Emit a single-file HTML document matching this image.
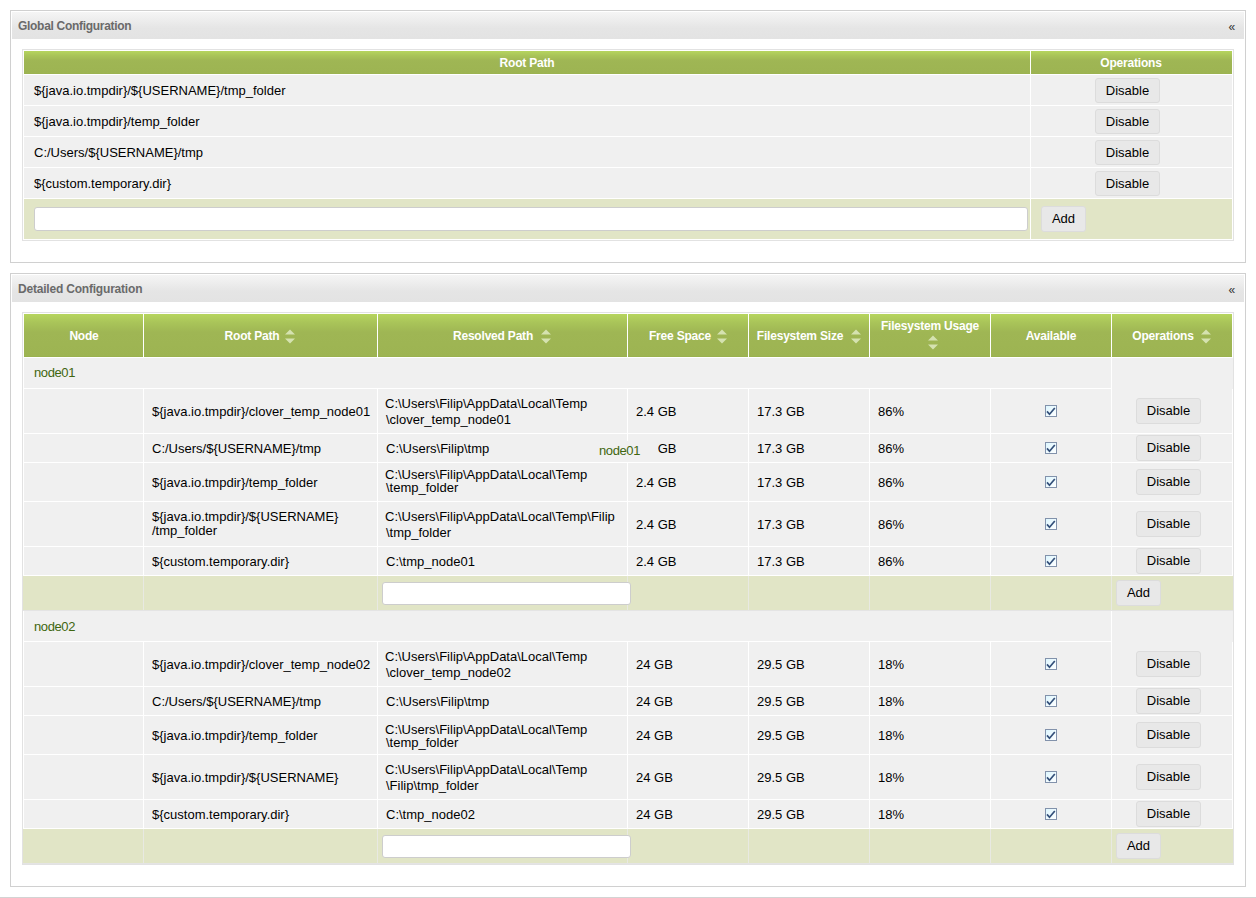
<!DOCTYPE html>
<html><head><meta charset="utf-8"><style>
html,body{margin:0;padding:0;background:#fff;}
body{position:relative;width:1256px;height:898px;overflow:hidden;font-family:"Liberation Sans",sans-serif;}
body>div,body>svg{position:absolute;box-sizing:border-box;}
.t{white-space:nowrap;line-height:1;}
.btn{background:#e8e8e8;border:1px solid #dcdcdc;border-radius:3px;text-align:center;font-size:13px;color:#000;}
.inp{background:#fff;border:1px solid #cdcdcd;border-radius:3px;}
</style></head><body>
<div style="left:10px;top:10px;width:1236px;height:253px;border:1px solid #d0d0d0;box-sizing:border-box;background:#fff"></div>
<div style="left:12px;top:12px;width:1232px;height:27px;background:linear-gradient(to bottom,#f5f5f5 0%,#e5e5e5 60%,#e3e3e3 100%)"></div>
<div class="t" style="left:18px;top:20px;font-size:12px;font-weight:bold;color:#6a6a6a;letter-spacing:-0.3px">Global Configuration</div>
<div class="t" style="left:1228.5px;top:21px;font-size:12px;font-weight:normal;color:#333;">&laquo;</div>
<div style="left:22px;top:49px;width:1212px;height:192px;border:1px solid #e2e2e2;box-sizing:border-box;background:#fff"></div>
<div style="left:24px;top:51px;width:1006px;height:23px;background:linear-gradient(to bottom,#b6d55e 0%,#a9c459 20%,#9fb654 42%,#9db452 97%,#98b04d 100%)"></div>
<div style="left:1031px;top:51px;width:201px;height:23px;background:linear-gradient(to bottom,#b6d55e 0%,#a9c459 20%,#9fb654 42%,#9db452 97%,#98b04d 100%)"></div>
<div class="t" style="left:377px;width:300px;text-align:center;top:57px;font-size:12px;font-weight:bold;color:#fff;letter-spacing:-0.2px">Root Path</div>
<div class="t" style="left:981px;width:300px;text-align:center;top:57px;font-size:12px;font-weight:bold;color:#fff;letter-spacing:-0.2px">Operations</div>
<div style="left:24px;top:75px;width:1006px;height:30px;background:#f0f0f0"></div>
<div style="left:1031px;top:75px;width:201px;height:30px;background:#f0f0f0"></div>
<div class="t" style="left:34px;top:84px;font-size:13px;font-weight:normal;color:#000;">${java.io.tmpdir}/${USERNAME}/tmp_folder</div>
<div class="btn" style="left:1095px;top:78px;width:65px;height:25px;line-height:23px">Disable</div>
<div style="left:24px;top:106px;width:1006px;height:30px;background:#f0f0f0"></div>
<div style="left:1031px;top:106px;width:201px;height:30px;background:#f0f0f0"></div>
<div class="t" style="left:34px;top:115px;font-size:13px;font-weight:normal;color:#000;">${java.io.tmpdir}/temp_folder</div>
<div class="btn" style="left:1095px;top:109px;width:65px;height:25px;line-height:23px">Disable</div>
<div style="left:24px;top:137px;width:1006px;height:30px;background:#f0f0f0"></div>
<div style="left:1031px;top:137px;width:201px;height:30px;background:#f0f0f0"></div>
<div class="t" style="left:34px;top:146px;font-size:13px;font-weight:normal;color:#000;">C:/Users/${USERNAME}/tmp</div>
<div class="btn" style="left:1095px;top:140px;width:65px;height:25px;line-height:23px">Disable</div>
<div style="left:24px;top:168px;width:1006px;height:30px;background:#f0f0f0"></div>
<div style="left:1031px;top:168px;width:201px;height:30px;background:#f0f0f0"></div>
<div class="t" style="left:34px;top:177px;font-size:13px;font-weight:normal;color:#000;">${custom.temporary.dir}</div>
<div class="btn" style="left:1095px;top:171px;width:65px;height:25px;line-height:23px">Disable</div>
<div style="left:24px;top:199px;width:1006px;height:40px;background:#e1e5c6"></div>
<div style="left:1031px;top:199px;width:201px;height:40px;background:#e1e5c6"></div>
<div class="inp" style="left:34px;top:207px;width:994px;height:24px"></div>
<div class="btn" style="left:1041px;top:206px;width:45px;height:26px;line-height:24px">Add</div>
<div style="left:10px;top:273px;width:1236px;height:614px;border:1px solid #d0d0d0;box-sizing:border-box;background:#fff"></div>
<div style="left:12px;top:275px;width:1232px;height:27px;background:linear-gradient(to bottom,#f5f5f5 0%,#e5e5e5 60%,#e3e3e3 100%)"></div>
<div class="t" style="left:18px;top:283px;font-size:12px;font-weight:bold;color:#6a6a6a;letter-spacing:-0.2px">Detailed Configuration</div>
<div class="t" style="left:1228.5px;top:284px;font-size:12px;font-weight:normal;color:#333;">&laquo;</div>
<div style="left:22px;top:312px;width:1212px;height:553px;border:1px solid #e2e2e2;box-sizing:border-box;background:#fff"></div>
<div style="left:24px;top:314px;width:119px;height:43px;background:linear-gradient(to bottom,#b6d55e 0%,#a9c459 20%,#9fb654 42%,#9db452 97%,#98b04d 100%)"></div>
<div style="left:144px;top:314px;width:233px;height:43px;background:linear-gradient(to bottom,#b6d55e 0%,#a9c459 20%,#9fb654 42%,#9db452 97%,#98b04d 100%)"></div>
<div style="left:378px;top:314px;width:249px;height:43px;background:linear-gradient(to bottom,#b6d55e 0%,#a9c459 20%,#9fb654 42%,#9db452 97%,#98b04d 100%)"></div>
<div style="left:628px;top:314px;width:120px;height:43px;background:linear-gradient(to bottom,#b6d55e 0%,#a9c459 20%,#9fb654 42%,#9db452 97%,#98b04d 100%)"></div>
<div style="left:749px;top:314px;width:120px;height:43px;background:linear-gradient(to bottom,#b6d55e 0%,#a9c459 20%,#9fb654 42%,#9db452 97%,#98b04d 100%)"></div>
<div style="left:870px;top:314px;width:120px;height:43px;background:linear-gradient(to bottom,#b6d55e 0%,#a9c459 20%,#9fb654 42%,#9db452 97%,#98b04d 100%)"></div>
<div style="left:991px;top:314px;width:120px;height:43px;background:linear-gradient(to bottom,#b6d55e 0%,#a9c459 20%,#9fb654 42%,#9db452 97%,#98b04d 100%)"></div>
<div style="left:1112px;top:314px;width:120px;height:43px;background:linear-gradient(to bottom,#b6d55e 0%,#a9c459 20%,#9fb654 42%,#9db452 97%,#98b04d 100%)"></div>
<div class="t" style="left:-66px;width:300px;text-align:center;top:330px;font-size:12px;font-weight:bold;color:#fff;letter-spacing:-0.2px">Node</div>
<div class="t" style="left:102px;width:300px;text-align:center;top:330px;font-size:12px;font-weight:bold;color:#fff;letter-spacing:-0.2px">Root Path</div>
<svg style="left:285px;top:329px" width="10" height="15" viewBox="0 0 10 15"><path d="M0 5.5 L5 0.5 L10 5.5 Z M0 9.5 L5 14.5 L10 9.5 Z" fill="#d5e2b0"/></svg>
<div class="t" style="left:343px;width:300px;text-align:center;top:330px;font-size:12px;font-weight:bold;color:#fff;letter-spacing:-0.2px">Resolved Path</div>
<svg style="left:541px;top:329px" width="10" height="15" viewBox="0 0 10 15"><path d="M0 5.5 L5 0.5 L10 5.5 Z M0 9.5 L5 14.5 L10 9.5 Z" fill="#d5e2b0"/></svg>
<div class="t" style="left:530px;width:300px;text-align:center;top:330px;font-size:12px;font-weight:bold;color:#fff;letter-spacing:-0.2px">Free Space</div>
<svg style="left:717px;top:329px" width="10" height="15" viewBox="0 0 10 15"><path d="M0 5.5 L5 0.5 L10 5.5 Z M0 9.5 L5 14.5 L10 9.5 Z" fill="#d5e2b0"/></svg>
<div class="t" style="left:650px;width:300px;text-align:center;top:330px;font-size:12px;font-weight:bold;color:#fff;letter-spacing:-0.2px">Filesystem Size</div>
<svg style="left:851px;top:329px" width="10" height="15" viewBox="0 0 10 15"><path d="M0 5.5 L5 0.5 L10 5.5 Z M0 9.5 L5 14.5 L10 9.5 Z" fill="#d5e2b0"/></svg>
<div class="t" style="left:780px;width:300px;text-align:center;top:320px;font-size:12px;font-weight:bold;color:#fff;letter-spacing:-0.2px">Filesystem Usage</div>
<svg style="left:928px;top:335px" width="10" height="15" viewBox="0 0 10 15"><path d="M0 5.5 L5 0.5 L10 5.5 Z M0 9.5 L5 14.5 L10 9.5 Z" fill="#d5e2b0"/></svg>
<div class="t" style="left:901px;width:300px;text-align:center;top:330px;font-size:12px;font-weight:bold;color:#fff;letter-spacing:-0.2px">Available</div>
<div class="t" style="left:1013px;width:300px;text-align:center;top:330px;font-size:12px;font-weight:bold;color:#fff;letter-spacing:-0.2px">Operations</div>
<svg style="left:1201px;top:329px" width="10" height="15" viewBox="0 0 10 15"><path d="M0 5.5 L5 0.5 L10 5.5 Z M0 9.5 L5 14.5 L10 9.5 Z" fill="#d5e2b0"/></svg>
<div style="left:24px;top:358px;width:1087px;height:30px;background:#f0f0f0"></div>
<div style="left:1112px;top:358px;width:121px;height:31px;background:#f0f0f0"></div>
<div class="t" style="left:34px;top:366px;font-size:13px;font-weight:normal;color:#40660f;letter-spacing:-0.4px">node01</div>
<div style="left:24px;top:389px;width:119px;height:44px;background:#f0f0f0"></div>
<div style="left:144px;top:389px;width:233px;height:44px;background:#f0f0f0"></div>
<div style="left:378px;top:389px;width:249px;height:44px;background:#f0f0f0"></div>
<div style="left:628px;top:389px;width:120px;height:44px;background:#f0f0f0"></div>
<div style="left:749px;top:389px;width:120px;height:44px;background:#f0f0f0"></div>
<div style="left:870px;top:389px;width:120px;height:44px;background:#f0f0f0"></div>
<div style="left:991px;top:389px;width:120px;height:44px;background:#f0f0f0"></div>
<div style="left:1112px;top:389px;width:120px;height:44px;background:#f0f0f0"></div>
<div class="t" style="left:152px;top:405px;font-size:13px;font-weight:normal;color:#000;">${java.io.tmpdir}/clover_temp_node01</div>
<div class="t" style="left:385px;top:397px;font-size:13px;font-weight:normal;color:#000;">C:\Users\Filip\AppData\Local\Temp</div>
<div class="t" style="left:386px;top:413px;font-size:13px;font-weight:normal;color:#000;">\clover_temp_node01</div>
<div class="t" style="left:636px;top:405px;font-size:13px;font-weight:normal;color:#000;">2.4 GB</div>
<div class="t" style="left:757px;top:405px;font-size:13px;font-weight:normal;color:#000;">17.3 GB</div>
<div class="t" style="left:878px;top:405px;font-size:13px;font-weight:normal;color:#000;">86%</div>
<svg style="left:1045px;top:405px" width="12" height="12" viewBox="0 0 12 12"><defs><linearGradient id="cg1045405" x1="0" y1="0" x2="1" y2="1"><stop offset="0" stop-color="#dcf6ff"/><stop offset="1" stop-color="#ffffff"/></linearGradient></defs><rect x="0.5" y="0.5" width="11" height="11" fill="url(#cg1045405)" stroke="#8292ab"/><path d="M2 6.4 L4.5 9.3 L9.8 3" fill="none" stroke="#34507a" stroke-width="1.7"/></svg>
<div class="btn" style="left:1136px;top:398px;width:65px;height:26px;line-height:24px">Disable</div>
<div style="left:24px;top:434px;width:119px;height:28px;background:#f0f0f0"></div>
<div style="left:144px;top:434px;width:233px;height:28px;background:#f0f0f0"></div>
<div style="left:378px;top:434px;width:249px;height:28px;background:#f0f0f0"></div>
<div style="left:628px;top:434px;width:120px;height:28px;background:#f0f0f0"></div>
<div style="left:749px;top:434px;width:120px;height:28px;background:#f0f0f0"></div>
<div style="left:870px;top:434px;width:120px;height:28px;background:#f0f0f0"></div>
<div style="left:991px;top:434px;width:120px;height:28px;background:#f0f0f0"></div>
<div style="left:1112px;top:434px;width:120px;height:28px;background:#f0f0f0"></div>
<div class="t" style="left:152px;top:442px;font-size:13px;font-weight:normal;color:#000;">C:/Users/${USERNAME}/tmp</div>
<div class="t" style="left:386px;top:442px;font-size:13px;font-weight:normal;color:#000;">C:\Users\Filip\tmp</div>
<div class="t" style="left:636px;top:442px;font-size:13px;font-weight:normal;color:#000;">2.4 GB</div>
<div class="t" style="left:757px;top:442px;font-size:13px;font-weight:normal;color:#000;">17.3 GB</div>
<div class="t" style="left:878px;top:442px;font-size:13px;font-weight:normal;color:#000;">86%</div>
<svg style="left:1045px;top:442px" width="12" height="12" viewBox="0 0 12 12"><defs><linearGradient id="cg1045442" x1="0" y1="0" x2="1" y2="1"><stop offset="0" stop-color="#dcf6ff"/><stop offset="1" stop-color="#ffffff"/></linearGradient></defs><rect x="0.5" y="0.5" width="11" height="11" fill="url(#cg1045442)" stroke="#8292ab"/><path d="M2 6.4 L4.5 9.3 L9.8 3" fill="none" stroke="#34507a" stroke-width="1.7"/></svg>
<div class="btn" style="left:1136px;top:435px;width:65px;height:26px;line-height:24px">Disable</div>
<div style="left:24px;top:463px;width:119px;height:38px;background:#f0f0f0"></div>
<div style="left:144px;top:463px;width:233px;height:38px;background:#f0f0f0"></div>
<div style="left:378px;top:463px;width:249px;height:38px;background:#f0f0f0"></div>
<div style="left:628px;top:463px;width:120px;height:38px;background:#f0f0f0"></div>
<div style="left:749px;top:463px;width:120px;height:38px;background:#f0f0f0"></div>
<div style="left:870px;top:463px;width:120px;height:38px;background:#f0f0f0"></div>
<div style="left:991px;top:463px;width:120px;height:38px;background:#f0f0f0"></div>
<div style="left:1112px;top:463px;width:120px;height:38px;background:#f0f0f0"></div>
<div class="t" style="left:152px;top:476px;font-size:13px;font-weight:normal;color:#000;">${java.io.tmpdir}/temp_folder</div>
<div class="t" style="left:385px;top:468px;font-size:13px;font-weight:normal;color:#000;">C:\Users\Filip\AppData\Local\Temp</div>
<div class="t" style="left:386px;top:481px;font-size:13px;font-weight:normal;color:#000;">\temp_folder</div>
<div class="t" style="left:636px;top:476px;font-size:13px;font-weight:normal;color:#000;">2.4 GB</div>
<div class="t" style="left:757px;top:476px;font-size:13px;font-weight:normal;color:#000;">17.3 GB</div>
<div class="t" style="left:878px;top:476px;font-size:13px;font-weight:normal;color:#000;">86%</div>
<svg style="left:1045px;top:476px" width="12" height="12" viewBox="0 0 12 12"><defs><linearGradient id="cg1045476" x1="0" y1="0" x2="1" y2="1"><stop offset="0" stop-color="#dcf6ff"/><stop offset="1" stop-color="#ffffff"/></linearGradient></defs><rect x="0.5" y="0.5" width="11" height="11" fill="url(#cg1045476)" stroke="#8292ab"/><path d="M2 6.4 L4.5 9.3 L9.8 3" fill="none" stroke="#34507a" stroke-width="1.7"/></svg>
<div class="btn" style="left:1136px;top:469px;width:65px;height:26px;line-height:24px">Disable</div>
<div style="left:24px;top:502px;width:119px;height:44px;background:#f0f0f0"></div>
<div style="left:144px;top:502px;width:233px;height:44px;background:#f0f0f0"></div>
<div style="left:378px;top:502px;width:249px;height:44px;background:#f0f0f0"></div>
<div style="left:628px;top:502px;width:120px;height:44px;background:#f0f0f0"></div>
<div style="left:749px;top:502px;width:120px;height:44px;background:#f0f0f0"></div>
<div style="left:870px;top:502px;width:120px;height:44px;background:#f0f0f0"></div>
<div style="left:991px;top:502px;width:120px;height:44px;background:#f0f0f0"></div>
<div style="left:1112px;top:502px;width:120px;height:44px;background:#f0f0f0"></div>
<div class="t" style="left:152px;top:510px;font-size:13px;font-weight:normal;color:#000;">${java.io.tmpdir}/${USERNAME}</div>
<div class="t" style="left:152px;top:524px;font-size:13px;font-weight:normal;color:#000;">/tmp_folder</div>
<div class="t" style="left:385px;top:510px;font-size:13px;font-weight:normal;color:#000;">C:\Users\Filip\AppData\Local\Temp\Filip</div>
<div class="t" style="left:386px;top:526px;font-size:13px;font-weight:normal;color:#000;">\tmp_folder</div>
<div class="t" style="left:636px;top:518px;font-size:13px;font-weight:normal;color:#000;">2.4 GB</div>
<div class="t" style="left:757px;top:518px;font-size:13px;font-weight:normal;color:#000;">17.3 GB</div>
<div class="t" style="left:878px;top:518px;font-size:13px;font-weight:normal;color:#000;">86%</div>
<svg style="left:1045px;top:518px" width="12" height="12" viewBox="0 0 12 12"><defs><linearGradient id="cg1045518" x1="0" y1="0" x2="1" y2="1"><stop offset="0" stop-color="#dcf6ff"/><stop offset="1" stop-color="#ffffff"/></linearGradient></defs><rect x="0.5" y="0.5" width="11" height="11" fill="url(#cg1045518)" stroke="#8292ab"/><path d="M2 6.4 L4.5 9.3 L9.8 3" fill="none" stroke="#34507a" stroke-width="1.7"/></svg>
<div class="btn" style="left:1136px;top:511px;width:65px;height:26px;line-height:24px">Disable</div>
<div style="left:24px;top:547px;width:119px;height:28px;background:#f0f0f0"></div>
<div style="left:144px;top:547px;width:233px;height:28px;background:#f0f0f0"></div>
<div style="left:378px;top:547px;width:249px;height:28px;background:#f0f0f0"></div>
<div style="left:628px;top:547px;width:120px;height:28px;background:#f0f0f0"></div>
<div style="left:749px;top:547px;width:120px;height:28px;background:#f0f0f0"></div>
<div style="left:870px;top:547px;width:120px;height:28px;background:#f0f0f0"></div>
<div style="left:991px;top:547px;width:120px;height:28px;background:#f0f0f0"></div>
<div style="left:1112px;top:547px;width:120px;height:28px;background:#f0f0f0"></div>
<div class="t" style="left:152px;top:555px;font-size:13px;font-weight:normal;color:#000;">${custom.temporary.dir}</div>
<div class="t" style="left:386px;top:555px;font-size:13px;font-weight:normal;color:#000;">C:\tmp_node01</div>
<div class="t" style="left:636px;top:555px;font-size:13px;font-weight:normal;color:#000;">2.4 GB</div>
<div class="t" style="left:757px;top:555px;font-size:13px;font-weight:normal;color:#000;">17.3 GB</div>
<div class="t" style="left:878px;top:555px;font-size:13px;font-weight:normal;color:#000;">86%</div>
<svg style="left:1045px;top:555px" width="12" height="12" viewBox="0 0 12 12"><defs><linearGradient id="cg1045555" x1="0" y1="0" x2="1" y2="1"><stop offset="0" stop-color="#dcf6ff"/><stop offset="1" stop-color="#ffffff"/></linearGradient></defs><rect x="0.5" y="0.5" width="11" height="11" fill="url(#cg1045555)" stroke="#8292ab"/><path d="M2 6.4 L4.5 9.3 L9.8 3" fill="none" stroke="#34507a" stroke-width="1.7"/></svg>
<div class="btn" style="left:1136px;top:548px;width:65px;height:26px;line-height:24px">Disable</div>
<div style="left:23px;top:576px;width:1210px;height:34px;background:#e1e5c6"></div>
<div style="left:143px;top:576px;width:1px;height:34px;background:#e8e9e2"></div>
<div style="left:377px;top:576px;width:1px;height:34px;background:#e8e9e2"></div>
<div style="left:627px;top:576px;width:1px;height:34px;background:#e8e9e2"></div>
<div style="left:748px;top:576px;width:1px;height:34px;background:#e8e9e2"></div>
<div style="left:869px;top:576px;width:1px;height:34px;background:#e8e9e2"></div>
<div style="left:990px;top:576px;width:1px;height:34px;background:#e8e9e2"></div>
<div style="left:1111px;top:576px;width:1px;height:34px;background:#e8e9e2"></div>
<div style="left:23px;top:610px;width:1210px;height:1px;background:#e4e4e4"></div>
<div class="inp" style="left:382px;top:582px;width:249px;height:23px"></div>
<div class="btn" style="left:1116px;top:580px;width:45px;height:26px;line-height:24px">Add</div>
<div style="left:24px;top:611px;width:1087px;height:30px;background:#f0f0f0"></div>
<div style="left:1112px;top:611px;width:121px;height:31px;background:#f0f0f0"></div>
<div class="t" style="left:34px;top:620px;font-size:13px;font-weight:normal;color:#40660f;letter-spacing:-0.4px">node02</div>
<div style="left:24px;top:642px;width:119px;height:44px;background:#f0f0f0"></div>
<div style="left:144px;top:642px;width:233px;height:44px;background:#f0f0f0"></div>
<div style="left:378px;top:642px;width:249px;height:44px;background:#f0f0f0"></div>
<div style="left:628px;top:642px;width:120px;height:44px;background:#f0f0f0"></div>
<div style="left:749px;top:642px;width:120px;height:44px;background:#f0f0f0"></div>
<div style="left:870px;top:642px;width:120px;height:44px;background:#f0f0f0"></div>
<div style="left:991px;top:642px;width:120px;height:44px;background:#f0f0f0"></div>
<div style="left:1112px;top:642px;width:120px;height:44px;background:#f0f0f0"></div>
<div class="t" style="left:152px;top:658px;font-size:13px;font-weight:normal;color:#000;">${java.io.tmpdir}/clover_temp_node02</div>
<div class="t" style="left:385px;top:650px;font-size:13px;font-weight:normal;color:#000;">C:\Users\Filip\AppData\Local\Temp</div>
<div class="t" style="left:386px;top:666px;font-size:13px;font-weight:normal;color:#000;">\clover_temp_node02</div>
<div class="t" style="left:636px;top:658px;font-size:13px;font-weight:normal;color:#000;">24 GB</div>
<div class="t" style="left:757px;top:658px;font-size:13px;font-weight:normal;color:#000;">29.5 GB</div>
<div class="t" style="left:878px;top:658px;font-size:13px;font-weight:normal;color:#000;">18%</div>
<svg style="left:1045px;top:658px" width="12" height="12" viewBox="0 0 12 12"><defs><linearGradient id="cg1045658" x1="0" y1="0" x2="1" y2="1"><stop offset="0" stop-color="#dcf6ff"/><stop offset="1" stop-color="#ffffff"/></linearGradient></defs><rect x="0.5" y="0.5" width="11" height="11" fill="url(#cg1045658)" stroke="#8292ab"/><path d="M2 6.4 L4.5 9.3 L9.8 3" fill="none" stroke="#34507a" stroke-width="1.7"/></svg>
<div class="btn" style="left:1136px;top:651px;width:65px;height:26px;line-height:24px">Disable</div>
<div style="left:24px;top:687px;width:119px;height:28px;background:#f0f0f0"></div>
<div style="left:144px;top:687px;width:233px;height:28px;background:#f0f0f0"></div>
<div style="left:378px;top:687px;width:249px;height:28px;background:#f0f0f0"></div>
<div style="left:628px;top:687px;width:120px;height:28px;background:#f0f0f0"></div>
<div style="left:749px;top:687px;width:120px;height:28px;background:#f0f0f0"></div>
<div style="left:870px;top:687px;width:120px;height:28px;background:#f0f0f0"></div>
<div style="left:991px;top:687px;width:120px;height:28px;background:#f0f0f0"></div>
<div style="left:1112px;top:687px;width:120px;height:28px;background:#f0f0f0"></div>
<div class="t" style="left:152px;top:695px;font-size:13px;font-weight:normal;color:#000;">C:/Users/${USERNAME}/tmp</div>
<div class="t" style="left:386px;top:695px;font-size:13px;font-weight:normal;color:#000;">C:\Users\Filip\tmp</div>
<div class="t" style="left:636px;top:695px;font-size:13px;font-weight:normal;color:#000;">24 GB</div>
<div class="t" style="left:757px;top:695px;font-size:13px;font-weight:normal;color:#000;">29.5 GB</div>
<div class="t" style="left:878px;top:695px;font-size:13px;font-weight:normal;color:#000;">18%</div>
<svg style="left:1045px;top:695px" width="12" height="12" viewBox="0 0 12 12"><defs><linearGradient id="cg1045695" x1="0" y1="0" x2="1" y2="1"><stop offset="0" stop-color="#dcf6ff"/><stop offset="1" stop-color="#ffffff"/></linearGradient></defs><rect x="0.5" y="0.5" width="11" height="11" fill="url(#cg1045695)" stroke="#8292ab"/><path d="M2 6.4 L4.5 9.3 L9.8 3" fill="none" stroke="#34507a" stroke-width="1.7"/></svg>
<div class="btn" style="left:1136px;top:688px;width:65px;height:26px;line-height:24px">Disable</div>
<div style="left:24px;top:716px;width:119px;height:38px;background:#f0f0f0"></div>
<div style="left:144px;top:716px;width:233px;height:38px;background:#f0f0f0"></div>
<div style="left:378px;top:716px;width:249px;height:38px;background:#f0f0f0"></div>
<div style="left:628px;top:716px;width:120px;height:38px;background:#f0f0f0"></div>
<div style="left:749px;top:716px;width:120px;height:38px;background:#f0f0f0"></div>
<div style="left:870px;top:716px;width:120px;height:38px;background:#f0f0f0"></div>
<div style="left:991px;top:716px;width:120px;height:38px;background:#f0f0f0"></div>
<div style="left:1112px;top:716px;width:120px;height:38px;background:#f0f0f0"></div>
<div class="t" style="left:152px;top:729px;font-size:13px;font-weight:normal;color:#000;">${java.io.tmpdir}/temp_folder</div>
<div class="t" style="left:385px;top:723px;font-size:13px;font-weight:normal;color:#000;">C:\Users\Filip\AppData\Local\Temp</div>
<div class="t" style="left:386px;top:736px;font-size:13px;font-weight:normal;color:#000;">\temp_folder</div>
<div class="t" style="left:636px;top:729px;font-size:13px;font-weight:normal;color:#000;">24 GB</div>
<div class="t" style="left:757px;top:729px;font-size:13px;font-weight:normal;color:#000;">29.5 GB</div>
<div class="t" style="left:878px;top:729px;font-size:13px;font-weight:normal;color:#000;">18%</div>
<svg style="left:1045px;top:729px" width="12" height="12" viewBox="0 0 12 12"><defs><linearGradient id="cg1045729" x1="0" y1="0" x2="1" y2="1"><stop offset="0" stop-color="#dcf6ff"/><stop offset="1" stop-color="#ffffff"/></linearGradient></defs><rect x="0.5" y="0.5" width="11" height="11" fill="url(#cg1045729)" stroke="#8292ab"/><path d="M2 6.4 L4.5 9.3 L9.8 3" fill="none" stroke="#34507a" stroke-width="1.7"/></svg>
<div class="btn" style="left:1136px;top:722px;width:65px;height:26px;line-height:24px">Disable</div>
<div style="left:24px;top:755px;width:119px;height:44px;background:#f0f0f0"></div>
<div style="left:144px;top:755px;width:233px;height:44px;background:#f0f0f0"></div>
<div style="left:378px;top:755px;width:249px;height:44px;background:#f0f0f0"></div>
<div style="left:628px;top:755px;width:120px;height:44px;background:#f0f0f0"></div>
<div style="left:749px;top:755px;width:120px;height:44px;background:#f0f0f0"></div>
<div style="left:870px;top:755px;width:120px;height:44px;background:#f0f0f0"></div>
<div style="left:991px;top:755px;width:120px;height:44px;background:#f0f0f0"></div>
<div style="left:1112px;top:755px;width:120px;height:44px;background:#f0f0f0"></div>
<div class="t" style="left:152px;top:771px;font-size:13px;font-weight:normal;color:#000;">${java.io.tmpdir}/${USERNAME}</div>
<div class="t" style="left:385px;top:763px;font-size:13px;font-weight:normal;color:#000;">C:\Users\Filip\AppData\Local\Temp</div>
<div class="t" style="left:386px;top:779px;font-size:13px;font-weight:normal;color:#000;">\Filip\tmp_folder</div>
<div class="t" style="left:636px;top:771px;font-size:13px;font-weight:normal;color:#000;">24 GB</div>
<div class="t" style="left:757px;top:771px;font-size:13px;font-weight:normal;color:#000;">29.5 GB</div>
<div class="t" style="left:878px;top:771px;font-size:13px;font-weight:normal;color:#000;">18%</div>
<svg style="left:1045px;top:771px" width="12" height="12" viewBox="0 0 12 12"><defs><linearGradient id="cg1045771" x1="0" y1="0" x2="1" y2="1"><stop offset="0" stop-color="#dcf6ff"/><stop offset="1" stop-color="#ffffff"/></linearGradient></defs><rect x="0.5" y="0.5" width="11" height="11" fill="url(#cg1045771)" stroke="#8292ab"/><path d="M2 6.4 L4.5 9.3 L9.8 3" fill="none" stroke="#34507a" stroke-width="1.7"/></svg>
<div class="btn" style="left:1136px;top:764px;width:65px;height:26px;line-height:24px">Disable</div>
<div style="left:24px;top:800px;width:119px;height:28px;background:#f0f0f0"></div>
<div style="left:144px;top:800px;width:233px;height:28px;background:#f0f0f0"></div>
<div style="left:378px;top:800px;width:249px;height:28px;background:#f0f0f0"></div>
<div style="left:628px;top:800px;width:120px;height:28px;background:#f0f0f0"></div>
<div style="left:749px;top:800px;width:120px;height:28px;background:#f0f0f0"></div>
<div style="left:870px;top:800px;width:120px;height:28px;background:#f0f0f0"></div>
<div style="left:991px;top:800px;width:120px;height:28px;background:#f0f0f0"></div>
<div style="left:1112px;top:800px;width:120px;height:28px;background:#f0f0f0"></div>
<div class="t" style="left:152px;top:808px;font-size:13px;font-weight:normal;color:#000;">${custom.temporary.dir}</div>
<div class="t" style="left:386px;top:808px;font-size:13px;font-weight:normal;color:#000;">C:\tmp_node02</div>
<div class="t" style="left:636px;top:808px;font-size:13px;font-weight:normal;color:#000;">24 GB</div>
<div class="t" style="left:757px;top:808px;font-size:13px;font-weight:normal;color:#000;">29.5 GB</div>
<div class="t" style="left:878px;top:808px;font-size:13px;font-weight:normal;color:#000;">18%</div>
<svg style="left:1045px;top:808px" width="12" height="12" viewBox="0 0 12 12"><defs><linearGradient id="cg1045808" x1="0" y1="0" x2="1" y2="1"><stop offset="0" stop-color="#dcf6ff"/><stop offset="1" stop-color="#ffffff"/></linearGradient></defs><rect x="0.5" y="0.5" width="11" height="11" fill="url(#cg1045808)" stroke="#8292ab"/><path d="M2 6.4 L4.5 9.3 L9.8 3" fill="none" stroke="#34507a" stroke-width="1.7"/></svg>
<div class="btn" style="left:1136px;top:801px;width:65px;height:26px;line-height:24px">Disable</div>
<div style="left:23px;top:829px;width:1210px;height:34px;background:#e1e5c6"></div>
<div style="left:143px;top:829px;width:1px;height:34px;background:#e8e9e2"></div>
<div style="left:377px;top:829px;width:1px;height:34px;background:#e8e9e2"></div>
<div style="left:627px;top:829px;width:1px;height:34px;background:#e8e9e2"></div>
<div style="left:748px;top:829px;width:1px;height:34px;background:#e8e9e2"></div>
<div style="left:869px;top:829px;width:1px;height:34px;background:#e8e9e2"></div>
<div style="left:990px;top:829px;width:1px;height:34px;background:#e8e9e2"></div>
<div style="left:1111px;top:829px;width:1px;height:34px;background:#e8e9e2"></div>
<div style="left:23px;top:863px;width:1210px;height:1px;background:#e4e4e4"></div>
<div class="inp" style="left:382px;top:835px;width:249px;height:23px"></div>
<div class="btn" style="left:1116px;top:833px;width:45px;height:26px;line-height:24px">Add</div>
<div style="left:588px;top:441px;width:70px;height:21px;background:#f0f0f0"></div>
<div class="t" style="left:599px;top:444px;font-size:13px;font-weight:normal;color:#40660f;letter-spacing:-0.4px">node01</div>
<div style="left:0px;top:897px;width:1256px;height:1px;background:#d3d3d3"></div>
</body></html>
